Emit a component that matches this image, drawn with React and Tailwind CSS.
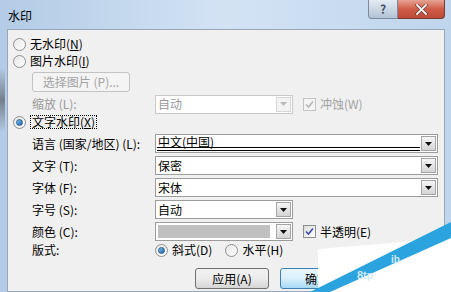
import React from "react";

function Radio({ checked }) {
  return (
    <span className="relative flex items-center justify-center w-[13px] h-[13px] rounded-full border border-[#8f8f8f] bg-gradient-to-br from-[#e6e6e6] to-[#ffffff] shrink-0">
      {checked && (
        <span className="w-[7px] h-[7px] rounded-full bg-gradient-to-br from-[#7fc3f0] to-[#1a5fa8] border border-[#2d5f8f]" />
      )}
    </span>
  );
}

function Check({ checked, disabled }) {
  return (
    <span
      className={`flex items-center justify-center w-[13px] h-[13px] border shrink-0 ${
        disabled ? "border-[#c4c4c4] bg-[#f4f4f4]" : "border-[#8f8f8f] bg-gradient-to-br from-[#dcdcdc] to-[#ffffff]"
      }`}
    >
      {checked && (
        <svg width="9" height="9" viewBox="0 0 9 9">
          <path
            d="M1 4.5 L3.5 7 L8 1.5"
            fill="none"
            stroke={disabled ? "#b5b5b5" : "#3a4fa0"}
            strokeWidth="1.6"
          />
        </svg>
      )}
    </span>
  );
}

function Arrow({ disabled }) {
  return (
    <span
      className={`flex items-center justify-center w-[15px] h-[15px] mr-[1px] border ${
        disabled ? "border-[#d6d6d6] bg-[#f3f3f3]" : "border-[#a5a5a5] bg-gradient-to-b from-[#f6f6f6] to-[#d4d4d4]"
      }`}
    >
      <svg width="7" height="4" viewBox="0 0 7 4">
        <path d="M0 0 H7 L3.5 4 Z" fill={disabled ? "#b8b8b8" : "#111"} />
      </svg>
    </span>
  );
}

function Select({ value, width, disabled, swatch, underline }) {
  return (
    <div
      className={`relative flex items-center h-[19px] border bg-white ${width} ${
        disabled ? "border-[#c9c9c9]" : "border-[#9c9c9c]"
      }`}
    >
      <div
        className={`flex-1 flex items-center h-full px-[2px] ${underline ? "pb-[4px]" : ""} ${
          disabled ? "text-[#9a9a9a]" : "text-black"
        }`}
      >
        {swatch ? <span className="w-[112px] h-[13px] bg-[#c0c0c0]" /> : <span>{value}</span>}
      </div>
      {underline && (
        <span className="absolute left-[1px] right-[17px] bottom-[1px] h-[4px] border-y border-black" />
      )}
      <Arrow disabled={disabled} />
    </div>
  );
}

function Row({ label, children }) {
  return (
    <div className="flex items-center h-[19px]">
      <div className="w-[123px] pl-[25px] shrink-0 box-content whitespace-pre">{label}</div>
      {children}
    </div>
  );
}

export default function App() {
  return (
    <div className="relative w-[451px] h-[292px] overflow-hidden flex flex-col bg-gradient-to-r from-[#b3cbe6] via-[#d3e3f4] to-[#bfd5ec] font-['Noto_Sans_CJK_SC','Liberation_Sans',sans-serif] text-[12px] leading-none text-black">
      {/* title bar */}
      <div className="flex h-[29px] shrink-0">
        <div className="flex-1 pl-[8px] pt-[10px] text-[12px] text-black">水印</div>
        <div className="flex h-[19px] mr-[6px]">
          <div className="w-[30px] h-full flex items-center justify-center border border-[#7c8a9b] border-t-0 rounded-bl-[4px] bg-gradient-to-b from-[#e4ebf3] via-[#cbd7e4] to-[#b2c3d6] text-[#46546a] text-[12px] font-bold">
            ?
          </div>
          <div className="w-[47px] h-full flex items-center justify-center border border-[#7a3a30] border-t-0 border-l-0 rounded-br-[4px] bg-gradient-to-b from-[#e6a394] via-[#cf5c48] to-[#bc4a36]">
            <svg width="13" height="11" viewBox="0 0 13 11">
              <path d="M2 1 L11 10 M11 1 L2 10" stroke="#6a3a32" strokeWidth="3.4" strokeLinecap="round" />
              <path d="M2 1 L11 10 M11 1 L2 10" stroke="#f4f0ee" strokeWidth="1.9" strokeLinecap="round" />
            </svg>
          </div>
        </div>
      </div>

      {/* client area */}
      <div className="flex-1 ml-[7px] mr-[6px] border border-[#97a6b8] bg-[#f0f0f0] pl-[5px] pt-[6px] flex flex-col">
        <div className="flex items-center gap-[4px] h-[16px]">
          <Radio />
          <span>无水印(<span className="underline">N</span>)</span>
        </div>
        <div className="flex items-center gap-[4px] h-[16px] mt-[1px]">
          <Radio />
          <span>图片水印(<span className="underline">I</span>)</span>
        </div>
        <div className="ml-[19px] mt-[3px] w-[98px] h-[20px] flex items-center justify-center border border-[#c3c3c3] rounded-[3px] bg-[#f4f4f4] text-[#a3a3a3]">
          选择图片 (P)...
        </div>
        <div className="flex items-center h-[18px] mt-[3px]">
          <div className="w-[123px] pl-[19px] box-content shrink-0 text-[#9a9a9a]">缩放 (L):</div>
          <Select value="自动" width="w-[138px]" disabled />
          <div className="flex items-center gap-[4px] ml-[10px] text-[#a3a3a3]">
            <Check checked disabled />
            <span>冲蚀(W)</span>
          </div>
        </div>
        <div className="flex items-center gap-[4px] h-[16px] mt-[1px]">
          <Radio checked />
          <span className="border border-dotted border-black px-[1px]">
            文字水印(<span className="underline">X</span>)
          </span>
        </div>
        <div className="flex flex-col gap-[3px] mt-[4px] -ml-[6px]">
          <Row label="语言 (国家/地区) (L):">
            <Select value="中文(中国)" width="w-[283px]" underline />
          </Row>
          <Row label="文字 (T):">
            <Select value="保密" width="w-[283px]" />
          </Row>
          <Row label="字体 (F):">
            <Select value="宋体" width="w-[283px]" />
          </Row>
          <Row label="字号 (S):">
            <Select value="自动" width="w-[138px]" />
          </Row>
          <Row label="颜色 (C):">
            <Select width="w-[138px]" swatch />
            <div className="flex items-center gap-[4px] ml-[10px]">
              <Check checked />
              <span>半透明(E)</span>
            </div>
          </Row>
        </div>
        <div className="flex items-center h-[16px] mt-[1px] -ml-[6px]">
          <div className="w-[123px] pl-[25px] box-content shrink-0">版式:</div>
          <div className="flex items-center gap-[4px]">
            <Radio checked />
            <span>斜式(D)</span>
          </div>
          <div className="flex items-center gap-[4px] ml-[13px]">
            <Radio />
            <span>水平(H)</span>
          </div>
        </div>
        <div className="flex mt-[10px] ml-[182px] gap-[11px]">
          <div className="w-[74px] h-[21px] flex items-center justify-center border border-[#707070] rounded-[3px] bg-gradient-to-b from-[#f2f2f2] via-[#ebebeb] to-[#d6d6d6]">
            应用(A)
          </div>
          <div className="w-[74px] h-[21px] flex items-center justify-center border border-[#3c7fb1] rounded-[3px] bg-gradient-to-b from-[#eaf6fd] via-[#d9f0fc] to-[#a7d9f5]">
            确定
          </div>
        </div>
      </div>

      {/* desktop showing through the frame */}
      <div className="absolute left-0 top-[68px] w-[5px] h-[64px] bg-gradient-to-b from-transparent via-[#5a5f66] to-transparent opacity-70" />

      {/* watermark overlay */}
      <svg className="absolute inset-0 pointer-events-none" width="451" height="292" viewBox="0 0 451 292">
        <polygon points="318,249 451,238 451,292 318,292" fill="#ffffff" />
        <polygon points="310,292 330,292 451,238 451,222" fill="#2aa3de" />
        <text x="357" y="279" fill="#d3ebf8" fontSize="11" fontFamily="Liberation Sans, sans-serif" fontWeight="bold">
          8tp
        </text>
        <text x="391" y="263" fill="#d3ebf8" fontSize="10" fontFamily="Liberation Sans, sans-serif" fontWeight="bold">
          ib
        </text>
      </svg>
    </div>
  );
}
